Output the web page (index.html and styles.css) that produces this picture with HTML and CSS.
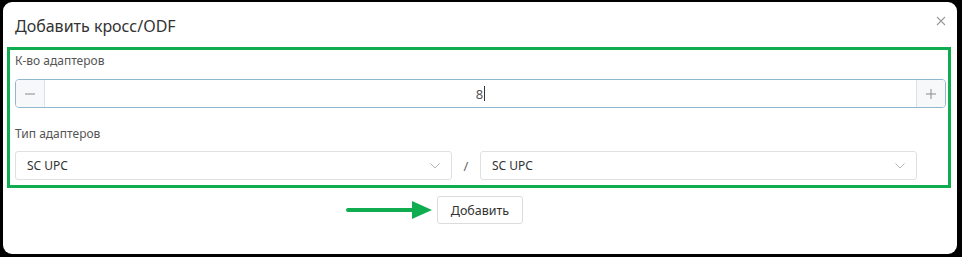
FILE: index.html
```html
<!DOCTYPE html>
<html lang="ru">

<head>
    <meta charset="UTF-8">
    <meta name="viewport" content="width=device-width, initial-scale=1.0">
    <title>Добавить кросс/ODF</title>
    <link rel="stylesheet" href="styles.css">
</head>

<body>
    <div class="modal">
        <div class="modal-header">
            <h4 class="modal-title">Добавить кросс/ODF</h4>
            <button class="close" type="button">
                <svg width="10" height="10" viewBox="0 0 10 10">
                    <path d="M1 1 L9 9 M9 1 L1 9" stroke="#9a9a9a" stroke-width="1.1" fill="none" />
                </svg>
            </button>
        </div>
        <div class="modal-body">
            <div class="marked">
                <label class="field-label">К-во адаптеров</label>
                <div class="spinner">
                    <button class="spin-btn" type="button">
                        <svg width="12" height="12" viewBox="0 0 12 12">
                            <path d="M1 6 H11" stroke="#8a8a8a" stroke-width="1" />
                        </svg>
                    </button>
                    <div class="spin-value">8<span class="caret"></span></div>
                    <button class="spin-btn" type="button">
                        <svg width="12" height="12" viewBox="0 0 12 12">
                            <path d="M1 6 H11 M6 1 V11" stroke="#8a8a8a" stroke-width="1" />
                        </svg>
                    </button>
                </div>
                <label class="field-label second">Тип адаптеров</label>
                <div class="type-row">
                    <div class="select">
                        <span>SC UPC</span>
                        <svg width="10" height="6" viewBox="0 0 10 6">
                            <path d="M0.5 0.5 L5 5 L9.5 0.5" stroke="#b5b5b5" stroke-width="1" fill="none" />
                        </svg>
                    </div>
                    <span class="slash">/</span>
                    <div class="select">
                        <span>SC UPC</span>
                        <svg width="10" height="6" viewBox="0 0 10 6">
                            <path d="M0.5 0.5 L5 5 L9.5 0.5" stroke="#b5b5b5" stroke-width="1" fill="none" />
                        </svg>
                    </div>
                </div>
            </div>
            <div class="actions">
                <svg class="arrow" width="86" height="20" viewBox="0 0 86 20">
                    <path d="M2 10 H68" stroke="#10ad50" stroke-width="4" stroke-linecap="round" />
                    <path d="M66 1 L86 10 L66 19 Z" fill="#10ad50" />
                </svg>
                <button class="btn-add" type="button">Добавить</button>
                <span></span>
            </div>
        </div>
    </div>
</body>

</html>
```

FILE: styles.css
```css
* {
    box-sizing: border-box;
}

html,
body {
    margin: 0;
    height: 257px;
    background-color: #000;
    overflow: hidden;
}

body {
    padding: 2px 5px 3px 3px;
    font-family: "Noto Sans", "Open Sans", sans-serif;
    color: #333;
}

.modal {
    height: 252px;
    background-color: #fff;
    border-radius: 9px;
}

.modal-header {
    display: flex;
    justify-content: space-between;
    height: 45px;
    padding: 0 11px 0 12px;
}

.modal-title {
    margin: 0;
    padding-top: 14px;
    font-size: 16px;
    line-height: 20px;
    font-weight: normal;
    color: #333;
}

.close {
    border: none;
    background: none;
    padding: 0;
    margin-top: 12px;
    height: 14px;
    cursor: pointer;
}

.marked {
    margin: 0 6px 0 4px;
    border: 3px solid #10ad50;
    padding: 2px 2px 5px 5px;
}

.field-label {
    display: block;
    font-size: 12px;
    line-height: 18px;
    color: #555;
    margin-bottom: 9px;
}

.field-label.second {
    margin-top: 17px;
    margin-bottom: 8px;
}

.spinner {
    display: flex;
    height: 29px;
    border: 1px solid #8fb8cf;
    border-radius: 4px;
    overflow: hidden;
}

.spin-btn {
    width: 29px;
    border: none;
    background-color: #f6f8fa;
    padding: 0;
    display: flex;
    align-items: center;
    justify-content: center;
}

.spin-btn:first-child {
    border-right: 1px solid #d7e2ea;
}

.spin-btn:last-child {
    border-left: 1px solid #d7e2ea;
}

.spin-value {
    flex: 1;
    display: flex;
    align-items: center;
    justify-content: center;
    font-size: 13px;
    color: #555;
}

.caret {
    display: inline-block;
    width: 1px;
    height: 15px;
    background-color: #333;
    margin-left: 1px;
}

.type-row {
    display: flex;
    align-items: center;
    padding-right: 29px;
}

.select {
    flex: 1;
    height: 29px;
    display: flex;
    align-items: center;
    justify-content: space-between;
    padding: 0 11px 0 11px;
    border: 1px solid #e0e0e0;
    border-radius: 3px;
    font-size: 12px;
    color: #333;
}

.slash {
    width: 28px;
    text-align: center;
    font-size: 13px;
    color: #666;
}

.actions {
    display: grid;
    grid-template-columns: 1fr auto 1fr;
    align-items: center;
    margin-top: 8px;
}

.arrow {
    justify-self: end;
    margin-right: 5px;
}

.btn-add {
    height: 28px;
    width: 86px;
    border: 1px solid #dcdcdc;
    border-radius: 3px;
    background-color: #fff;
    font-family: "Noto Sans", "Open Sans", sans-serif;
    font-size: 12.5px;
    color: #333;
}
```
